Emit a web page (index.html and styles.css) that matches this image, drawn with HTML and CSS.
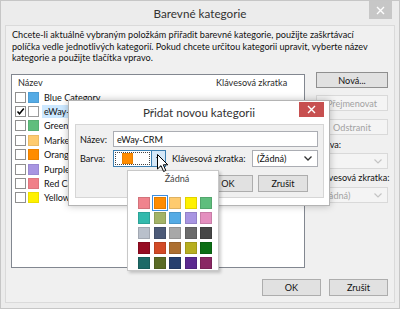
FILE: index.html
```html
<!DOCTYPE html>
<html>

<head>
    <meta charset="utf-8">
    <title>Barevné kategorie</title>
    <link rel="stylesheet" href="styles.css">
</head>

<body>
    <div class="window">
        <div class="titlebar">
            <span class="title">Barevné kategorie</span>
            <span class="close-btn gray">
                <svg width="9" height="9" viewBox="0 0 9 9"><path d="M1 1 L8 8 M8 1 L1 8" stroke="#fff" stroke-width="1.4"/></svg>
            </span>
        </div>

        <div class="client">
            <p class="intro">Chcete-li aktuálně vybraným položkám přiřadit barevné kategorie, použijte zaškrtávací<br>políčka vedle jednotlivých kategorií. Pokud chcete určitou kategorii upravit, vyberte název<br>kategorie a použijte tlačítka vpravo.</p>

            <div class="main">
                <div class="list">
                    <div class="list-head">
                        <span class="col-name">Název</span>
                        <span class="col-key">Klávesová zkratka</span>
                    </div>
                    <div class="row"><span class="check"></span><span class="swatch c-blue"></span><span class="name">Blue Category</span></div>
                    <div class="row selected">
                        <span class="check">
                            <svg width="9" height="9" viewBox="0 0 9 9"><path d="M1.5 4.5 L3.5 6.8 L7.8 1.5" fill="none" stroke="#000" stroke-width="1.5"/></svg>
                        </span>
                        <span class="swatch c-none"></span><span class="name">eWay-CRM</span>
                    </div>
                    <div class="row"><span class="check"></span><span class="swatch c-green"></span><span class="name">Green Category</span></div>
                    <div class="row"><span class="check"></span><span class="swatch c-peach"></span><span class="name">Marketing</span></div>
                    <div class="row"><span class="check"></span><span class="swatch c-orange"></span><span class="name">Orange Category</span></div>
                    <div class="row"><span class="check"></span><span class="swatch c-purple"></span><span class="name">Purple Category</span></div>
                    <div class="row"><span class="check"></span><span class="swatch c-red"></span><span class="name">Red Category</span></div>
                    <div class="row"><span class="check"></span><span class="swatch c-yellow"></span><span class="name">Yellow Category</span></div>
                </div>

                <div class="side">
                    <div class="btn side-btn default">Nová...</div>
                    <div class="btn side-btn disabled rename">Přejmenovat</div>
                    <div class="btn side-btn disabled remove">Odstranit</div>
                    <div class="side-label first">Barva:</div>
                    <div class="combo disabled">
                        <span></span>
                        <svg width="8" height="5" viewBox="0 0 8 5"><path d="M0.5 0.5 L4 4 L7.5 0.5" fill="none" stroke="#c4c4c4" stroke-width="1.2"/></svg>
                    </div>
                    <div class="side-label">Klávesová zkratka:</div>
                    <div class="combo disabled">
                        <span>(Žádná)</span>
                        <svg width="8" height="5" viewBox="0 0 8 5"><path d="M0.5 0.5 L4 4 L7.5 0.5" fill="none" stroke="#c4c4c4" stroke-width="1.2"/></svg>
                    </div>
                </div>
            </div>

            <div class="footer">
                <div class="btn foot-btn">OK</div>
                <div class="btn foot-btn">Zrušit</div>
            </div>
        </div>

        <!-- nested dialog -->
        <div class="subdialog">
            <div class="sub-title">
                Přidat novou kategorii
                <span class="close-btn red">
                    <svg width="9" height="9" viewBox="0 0 9 9"><path d="M1 1 L8 8 M8 1 L1 8" stroke="#fff" stroke-width="1.4"/></svg>
                </span>
            </div>
            <div class="sub-client">
                <div class="sub-row">
                    <span class="sub-label">Název:</span>
                    <div class="textbox">eWay-CRM</div>
                </div>
                <div class="sub-row second">
                    <span class="sub-label">Barva:</span>
                    <div class="colorbtn">
                        <div class="face"><span class="swatch c-orange"></span></div>
                        <div class="drop">
                            <svg width="5" height="3" viewBox="0 0 5 3"><path d="M0 0 L5 0 L2.5 3 Z" fill="#000"/></svg>
                        </div>
                    </div>
                    <span class="key-label">Klávesová zkratka:</span>
                    <div class="combo key-combo">
                        <span>(Žádná)</span>
                        <svg width="8" height="5" viewBox="0 0 8 5"><path d="M0.5 0.5 L4 4 L7.5 0.5" fill="none" stroke="#333" stroke-width="1.3"/></svg>
                    </div>
                </div>
                <div class="sub-row buttons">
                    <div class="btn sub-btn">OK</div>
                    <div class="btn sub-btn">Zrušit</div>
                </div>
            </div>
        </div>

        <!-- color drop-down -->
        <div class="palette">
            <div class="none-label">Žádná</div>
            <div class="grid">
                <span class="cell" style="background:#f0838d"></span>
                <span class="cell active" style="background:#ff8c00"></span>
                <span class="cell" style="background:#fecb6f"></span>
                <span class="cell" style="background:#fff100"></span>
                <span class="cell" style="background:#5fbe7d"></span>
                <span class="cell" style="background:#33baad"></span>
                <span class="cell" style="background:#a3b367"></span>
                <span class="cell" style="background:#55abe5"></span>
                <span class="cell" style="background:#a895e2"></span>
                <span class="cell" style="background:#e48fbf"></span>
                <span class="cell" style="background:#b9c0cb"></span>
                <span class="cell" style="background:#4c5a78"></span>
                <span class="cell" style="background:#a8a8a8"></span>
                <span class="cell" style="background:#6b6b6b"></span>
                <span class="cell" style="background:#474747"></span>
                <span class="cell" style="background:#960c22"></span>
                <span class="cell" style="background:#d24a26"></span>
                <span class="cell" style="background:#ac6f30"></span>
                <span class="cell" style="background:#b7ae1f"></span>
                <span class="cell" style="background:#0b6e14"></span>
                <span class="cell" style="background:#1d6a67"></span>
                <span class="cell" style="background:#5a6b25"></span>
                <span class="cell" style="background:#263f6e"></span>
                <span class="cell" style="background:#5b2a8f"></span>
                <span class="cell" style="background:#8a2864"></span>
            </div>
        </div>

        <svg class="cursor" width="12" height="19" viewBox="0 0 12 19">
            <path d="M0.5 0.5 L0.5 15 L4 11.6 L6.6 17.5 L8.8 16.5 L6.3 10.8 L10.8 10.8 Z" fill="#fff" stroke="#000" stroke-width="1"/>
        </svg>
    </div>
</body>

</html>
```

FILE: styles.css
```css
* {
    box-sizing: border-box;
}

body {
    margin: 0;
    font-family: Lato, "Noto Sans", sans-serif;
    font-size: 9.1px;
    color: #111;
}

.window {
    position: relative;
    width: 400px;
    height: 309px;
    background: #ececec;
    border: 1px solid #c6c6c6;
    display: flex;
    flex-direction: column;
    overflow: hidden;
}

.titlebar {
    position: relative;
    height: 24px;
    display: flex;
    align-items: center;
    justify-content: center;
}

.title {
    font-size: 11.7px;
    color: #333;
}

.close-btn {
    position: absolute;
    display: flex;
    align-items: center;
    justify-content: center;
}

.close-btn.gray {
    top: 0;
    right: 7px;
    width: 23px;
    height: 18px;
    background: #c7c7c7;
}

.client {
    flex: 1;
    margin: 0 4px 5px;
    background: #f0f0f0;
    border: 1px solid #dadada;
    padding: 3px 6px 6px 5px;
    display: flex;
    flex-direction: column;
}

.intro {
    margin: 0;
    padding-left: 1px;
    line-height: 11.5px;
    white-space: nowrap;
}

.main {
    display: flex;
    margin-top: 10.5px;
    gap: 11px;
}

/* category list */

.list {
    width: 294px;
    height: 194px;
    background: #fff;
    border: 1px solid #828790;
}

.list-head {
    display: flex;
    height: 15px;
    align-items: center;
    color: #2b2b2b;
}

.col-name {
    padding-left: 6px;
    width: 204px;
}

.col-key {
    flex: 1;
    white-space: nowrap;
    overflow: hidden;
}

.row {
    display: flex;
    align-items: center;
    height: 14.4px;
    padding-left: 3px;
    white-space: nowrap;
}

.check {
    width: 11px;
    height: 11px;
    border: 1px solid #8f8f8f;
    background: #fff;
    margin-right: 2px;
    display: flex;
    align-items: center;
    justify-content: center;
}

.swatch {
    width: 11px;
    height: 11px;
    margin-right: 5px;
    box-shadow: inset 0 0 0 1px rgba(0, 0, 0, 0.08);
}

.row.selected .name {
    background: #cce8ff;
    padding: 0 2px;
    margin-left: -2px;
    line-height: 13px;
}

.c-blue { background: #55abe5; }
.c-green { background: #5fbe7d; }
.c-peach { background: #fecb6f; }
.c-orange { background: #ff8c00; }
.c-purple { background: #a895e2; }
.c-red { background: #f08089; }
.c-yellow { background: #fff100; }

.c-none {
    background: #fff;
    border: 1px solid #9a9a9a;
    box-shadow: none;
}

/* buttons on the right */

.side {
    width: 72px;
    margin-top: -2px;
    display: flex;
    flex-direction: column;
}

.btn {
    display: flex;
    align-items: center;
    justify-content: center;
    background: #e1e1e1;
    border: 1px solid #adadad;
    white-space: nowrap;
}

.side-btn {
    height: 16px;
}

.btn.default {
    border-color: #8f8f8f;
}

.btn.disabled {
    background: #f4f4f4;
    border-color: #d9d9d9;
    color: #a2a2a2;
}

.rename {
    margin-top: 7px;
}

.remove {
    margin-top: 8px;
}

.side-label {
    margin-top: 3px;
    line-height: 12px;
    white-space: nowrap;
}

.side-label.first {
    margin-top: 4px;
}

.combo {
    height: 16px;
    margin-top: 2px;
    display: flex;
    align-items: center;
    justify-content: space-between;
    padding: 0 5px 0 4px;
    background: #fff;
    border: 1px solid #abadb3;
}

.side .combo + .side-label + .combo {
    margin-top: 3px;
}

.combo.disabled {
    background: #f4f4f4;
    border-color: #d9d9d9;
    color: #a2a2a2;
}

.footer {
    margin-top: 11px;
    display: flex;
    justify-content: flex-end;
    gap: 8px;
}

.foot-btn {
    width: 59px;
    height: 17px;
}

/* nested dialog */

.subdialog {
    position: absolute;
    left: 67px;
    top: 99px;
    width: 262px;
    height: 106px;
    background: #fff;
    border: 1px solid #b4b4b4;
    box-shadow: 0 0 7px rgba(0, 0, 0, 0.25);
    display: flex;
    flex-direction: column;
}

.sub-title {
    position: relative;
    height: 23px;
    padding-top: 5px;
    text-align: center;
    font-size: 11.6px;
    color: #333;
}

.close-btn.red {
    top: 1px;
    right: 5px;
    width: 25px;
    height: 15px;
    background: #c75050;
}

.sub-client {
    flex: 1;
    margin: 0 5px 7px 6px;
    background: #f0f0f0;
    border: 1px solid #d6d6d6;
    padding: 6px 5px 5px 4px;
    display: flex;
    flex-direction: column;
}

.sub-row {
    display: flex;
    align-items: center;
    height: 16px;
}

.sub-row.second {
    margin-top: 3px;
    height: 17px;
}

.sub-row.buttons {
    margin-top: 8px;
    height: 17px;
    justify-content: flex-end;
    gap: 5px;
    padding-right: 10px;
}

.sub-label {
    width: 33px;
    white-space: nowrap;
}

.textbox {
    flex: 1;
    height: 16px;
    background: #fff;
    border: 1px solid #abadb3;
    padding-left: 3px;
    display: flex;
    align-items: center;
}

.colorbtn {
    width: 53px;
    height: 17px;
    display: flex;
    background: #fff;
    border: 1px solid #3c7fb1;
}

.colorbtn .face {
    flex: 1;
    margin: 1px;
    border: 1px dotted #444;
    display: flex;
    align-items: center;
    padding-left: 6px;
}

.colorbtn .drop {
    width: 14px;
    background: #d5e8f8;
    border-left: 1px solid #3c7fb1;
    display: flex;
    align-items: center;
    justify-content: center;
}

.key-label {
    margin-left: 6px;
    white-space: nowrap;
}

.key-combo {
    width: 66px;
    height: 17px;
    margin: 0 0 0 auto;
    color: #111;
}

.sub-btn {
    width: 50px;
    height: 17px;
}

/* colour picker popup */

.palette {
    position: absolute;
    left: 126px;
    top: 169px;
    width: 92px;
    height: 101px;
    background: #fff;
    border: 1px solid #c8c8c8;
    box-shadow: 2px 2px 3px rgba(0, 0, 0, 0.2);
    padding: 2px 6px 0 10px;
}

.none-label {
    text-align: center;
    line-height: 12px;
    color: #444;
    padding-left: 4px;
}

.grid {
    margin-top: 12px;
    display: grid;
    grid-template-columns: repeat(5, 12px);
    grid-auto-rows: 12px;
    gap: 3px 3.5px;
}

.cell {
    box-shadow: inset 0 0 0 1px rgba(0, 0, 0, 0.12);
}

.cell.active {
    outline: 1px solid #3d8ee0;
    outline-offset: 1px;
}

.cursor {
    position: absolute;
    left: 156px;
    top: 153px;
}
```
